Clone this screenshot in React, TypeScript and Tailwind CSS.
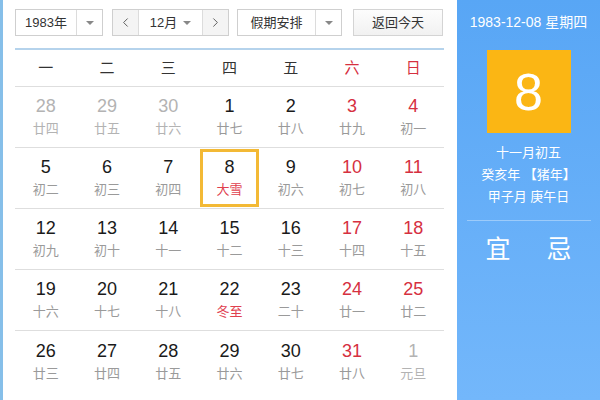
import { ChevronLeft, ChevronRight } from 'lucide-react'

type Day = {
  d: number
  lunar: string
  weekend?: boolean
  other?: boolean
  festival?: boolean
  selected?: boolean
}

const weekdays = ['一', '二', '三', '四', '五', '六', '日']

const weeks: Day[][] = [
  [
    { d: 28, lunar: '廿四', other: true },
    { d: 29, lunar: '廿五', other: true },
    { d: 30, lunar: '廿六', other: true },
    { d: 1, lunar: '廿七' },
    { d: 2, lunar: '廿八' },
    { d: 3, lunar: '廿九', weekend: true },
    { d: 4, lunar: '初一', weekend: true },
  ],
  [
    { d: 5, lunar: '初二' },
    { d: 6, lunar: '初三' },
    { d: 7, lunar: '初四' },
    { d: 8, lunar: '大雪', festival: true, selected: true },
    { d: 9, lunar: '初六' },
    { d: 10, lunar: '初七', weekend: true },
    { d: 11, lunar: '初八', weekend: true },
  ],
  [
    { d: 12, lunar: '初九' },
    { d: 13, lunar: '初十' },
    { d: 14, lunar: '十一' },
    { d: 15, lunar: '十二' },
    { d: 16, lunar: '十三' },
    { d: 17, lunar: '十四', weekend: true },
    { d: 18, lunar: '十五', weekend: true },
  ],
  [
    { d: 19, lunar: '十六' },
    { d: 20, lunar: '十七' },
    { d: 21, lunar: '十八' },
    { d: 22, lunar: '冬至', festival: true },
    { d: 23, lunar: '二十' },
    { d: 24, lunar: '廿一', weekend: true },
    { d: 25, lunar: '廿二', weekend: true },
  ],
  [
    { d: 26, lunar: '廿三' },
    { d: 27, lunar: '廿四' },
    { d: 28, lunar: '廿五' },
    { d: 29, lunar: '廿六' },
    { d: 30, lunar: '廿七' },
    { d: 31, lunar: '廿八', weekend: true },
    { d: 1, lunar: '元旦', other: true },
  ],
]

const font = { fontFamily: '"Liberation Sans", "Noto Sans CJK SC", sans-serif' }

const Caret = () => (
  <span className="inline-block h-0 w-0 border-x-[4px] border-t-[4px] border-x-transparent border-t-[#888]" />
)

const DayCell = ({ day }: { day: Day }) => {
  const numColor = day.other ? 'text-[#b3b3b3]' : day.weekend ? 'text-[#d6303f]' : 'text-[#1a1a1a]'
  const lunarColor = day.festival ? 'text-[#e0404e]' : day.other ? 'text-[#b3b3b3]' : 'text-[#9a9a9a]'
  return (
    <div
      className={
        day.selected
          ? 'mx-[1px] my-[1px] flex flex-col items-center justify-center border-[3px] border-[#f3b935]'
          : 'flex flex-col items-center justify-center'
      }
    >
      <span className={`text-[18px] leading-[22px] ${numColor}`}>{day.d}</span>
      <span className={`mt-[2px] text-[13px] leading-[20px] ${lunarColor}`}>{day.lunar}</span>
    </div>
  )
}

export default function App() {
  return (
    <div className="flex h-[400px] w-[600px] overflow-hidden bg-white" style={font}>
      {/* 좌측 테두리 */}
      <div className="w-[3px] shrink-0 bg-[#86bfe9]" />

      {/* 달력 본문 */}
      <div className="flex w-[454px] shrink-0 flex-col pl-[12px] pr-[13px] pt-[9px]">
        <div className="flex h-[27px] items-stretch text-[13px] text-[#333]">
          <div className="flex w-[88px] border border-[#cfcfcf]">
            <div className="flex flex-1 items-center justify-center">1983年</div>
            <div className="flex w-[26px] items-center justify-center border-l border-[#dcdcdc]">
              <Caret />
            </div>
          </div>

          <div className="ml-[9px] flex w-[117px] border border-[#cfcfcf]">
            <div className="flex w-[25px] items-center justify-center bg-[#f4f4f4] text-[#555]">
              <ChevronLeft className="h-[15px] w-[15px]" strokeWidth={1.5} />
            </div>
            <div className="flex flex-1 items-center justify-center gap-[6px] border-x border-[#dcdcdc]">
              <span>12月</span>
              <Caret />
            </div>
            <div className="flex w-[25px] items-center justify-center bg-[#f4f4f4] text-[#555]">
              <ChevronRight className="h-[15px] w-[15px]" strokeWidth={1.5} />
            </div>
          </div>

          <div className="ml-[8px] flex w-[105px] border border-[#cfcfcf]">
            <div className="flex flex-1 items-center justify-center">假期安排</div>
            <div className="flex w-[26px] items-center justify-center border-l border-[#dcdcdc]">
              <Caret />
            </div>
          </div>

          <div className="ml-[11px] flex w-[90px] items-center justify-center border border-[#d4d4d4] bg-gradient-to-b from-[#fdfdfd] to-[#f1f1f1]">
            返回今天
          </div>
        </div>

        <div className="mt-[12px] h-[2px] bg-[#b5d3ec]" />

        <div className="grid h-[37px] grid-cols-7 border-b border-[#dedede] text-[15px]">
          {weekdays.map((w, i) => (
            <div
              key={w}
              className={`flex items-center justify-center ${i >= 5 ? 'text-[#d6303f]' : 'text-[#333]'}`}
            >
              {w}
            </div>
          ))}
        </div>

        {weeks.map((week, i) => (
          <div
            key={i}
            className={`grid h-[61px] grid-cols-7 ${i < weeks.length - 1 ? 'border-b border-[#dedede]' : ''}`}
          >
            {week.map((day, j) => (
              <DayCell key={j} day={day} />
            ))}
          </div>
        ))}
      </div>

      {/* 우측 상세 패널 */}
      <div className="flex flex-1 flex-col items-center bg-gradient-to-b from-[#58a6f5] to-[#73b7fb] text-white">
        <div className="mt-[14px] text-[14px] leading-[16px]">1983-12-08 星期四</div>
        <div className="mt-[20px] flex h-[83px] w-[84px] items-center justify-center bg-[#fbb614] text-[52px] leading-none">
          8
        </div>
        <div className="mt-[9px] text-[13px] leading-[22px]">十一月初五</div>
        <div className="text-[13px] leading-[22px]">癸亥年 【猪年】</div>
        <div className="text-[13px] leading-[22px]">甲子月 庚午日</div>
        <div className="mt-[12px] h-[1px] w-[124px] bg-[#9ccbfa]" />
        <div className="mt-[13px] flex w-full justify-center gap-[36px] text-[25px] leading-[30px]">
          <span>宜</span>
          <span>忌</span>
        </div>
      </div>
    </div>
  )
}
